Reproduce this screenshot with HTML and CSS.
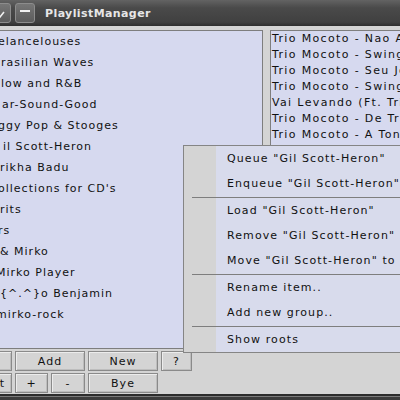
FILE: index.html
```html
<!DOCTYPE html>
<html>
<head>
  <title>PlaylistManager</title>
  <link rel="stylesheet" href="styles.css">
</head>
<body>
  <div class="window">
    <div class="titlebar">
      <span class="tb-btn tb-shade">
        <svg width="21" height="20" viewBox="0 0 21 20"><polyline points="8,11 10,14 14,9" fill="none" stroke="#f0f0f0" stroke-width="1.6"/></svg>
      </span>
      <span class="tb-btn"><span class="tb-minus"></span></span>
      <span class="tb-title">PlaylistManager</span>
    </div>

    <div class="panes">
      <ul class="groups">
        <li class="cut">elancelouses</li>
        <li>rasilian Waves</li>
        <li>low and R&amp;B</li>
        <li class="shift">ar-Sound-Good</li>
        <li class="cut">ggy Pop &amp; Stooges</li>
        <li class="shift2">il Scott-Heron</li>
        <li class="near">rikha Badu</li>
        <li class="cut">ollections for CD's</li>
        <li class="near">rits</li>
        <li class="cut">rs</li>
        <li class="near">&amp; Mirko</li>
        <li class="cut2">Mirko Player</li>
        <li class="near">{^.^}o Benjamin</li>
        <li class="cut2">mirko-rock</li>
      </ul>
      <ul class="tracks">
        <li>Trio Mocoto - Nao Adianta</li>
        <li>Trio Mocoto - Swing de Rua</li>
        <li>Trio Mocoto - Seu Jorge</li>
        <li>Trio Mocoto - Swingueira</li>
        <li>Vai Levando (Ft. Trio Mocoto)</li>
        <li>Trio Mocoto - De Tripa</li>
        <li>Trio Mocoto - A Tonga da Mironga</li>
      </ul>
    </div>

    <div class="buttons">
      <button class="btn">Play</button>
      <button class="btn wide">Add</button>
      <button class="btn">New</button>
      <button class="btn">?</button>
      <button class="btn btn-cut">Edit</button>
      <button class="btn">+</button>
      <button class="btn">-</button>
      <button class="btn">Bye</button>
    </div>

    <div class="frame-bottom"></div>

    <div class="menu">
      <div class="menu-item">Queue "Gil Scott-Heron"</div>
      <div class="menu-item">Enqueue "Gil Scott-Heron"</div>
      <div class="menu-sep"></div>
      <div class="menu-item">Load "Gil Scott-Heron"</div>
      <div class="menu-item">Remove "Gil Scott-Heron"</div>
      <div class="menu-item">Move "Gil Scott-Heron" to</div>
      <div class="menu-sep"></div>
      <div class="menu-item">Rename item..</div>
      <div class="menu-item">Add new group..</div>
      <div class="menu-sep"></div>
      <div class="menu-item">Show roots</div>
    </div>
  </div>
</body>
</html>
```

FILE: styles.css
```css
body {
  width: 400px;
  height: 400px;
  margin: 0;
  overflow: hidden;
  background: #d4d4d4;
  font-family: "DejaVu Sans", sans-serif;
  font-size: 11px;
  letter-spacing: 1px;
  color: #111;
}

.window {
  position: relative;
  height: 400px;
}

/* title bar */

.titlebar {
  display: flex;
  align-items: center;
  height: 26px;
  background: linear-gradient(#636363, #4a4a4a 30%, #404040 85%, #2e2e2e);
}

.tb-btn {
  display: flex;
  justify-content: center;
  box-sizing: border-box;
  width: 20px;
  height: 20px;
  margin-right: 4px;
  border: 1px solid #8c8c8c;
  border-radius: 3px;
  background: linear-gradient(#767676, #5c5c5c);
}

.tb-shade {
  width: 21px;
  margin-left: -10px;
}

.tb-shade svg {
  margin: -1px;
}

.tb-minus {
  width: 10px;
  height: 2px;
  margin-top: 6px;
  background: #f2f2f2;
}

.tb-title {
  margin-left: 6px;
  padding-top: 1px;
  color: #e6e6e6;
  font-weight: bold;
  letter-spacing: 0.4px;
}

/* list panes */

.panes {
  display: flex;
  gap: 7px;
  height: 319px;
  margin: 4px 0 0 -10px;
}

.groups,
.tracks {
  flex: none;
  margin: 0;
  padding: 0;
  list-style: none;
  background: #d6d9ef;
  border: 1px solid #7e7e7e;
  overflow: hidden;
}

.groups {
  width: 271px;
}

.tracks {
  width: 200px;
  letter-spacing: 1.35px;
}

.groups li {
  height: 21px;
  line-height: 21px;
  padding-left: 10px;
  white-space: nowrap;
}

.groups li.near {
  padding-left: 9px;
}

.groups li.shift {
  padding-left: 11px;
}

.groups li.shift2 {
  padding-left: 12px;
}

.groups li.cut {
  padding-left: 7px;
}

.groups li.cut2 {
  padding-left: 5px;
}

.tracks li {
  height: 16px;
  line-height: 16px;
  padding-left: 1px;
  white-space: nowrap;
}

/* buttons */

.buttons {
  display: grid;
  grid-template-columns: 70px 33px 34px 70px 31px;
  grid-template-rows: 20px 20px;
  gap: 2px 3px;
  margin: 2px 0 0 -58px;
}

.btn {
  padding: 0;
  font: inherit;
  letter-spacing: inherit;
  color: #111;
  background: #d4d4d4;
  border: 1px solid #8a8a8a;
  box-shadow: inset 1px 1px 0 #ececec, inset -1px -1px 0 #bdbdbd;
}

.btn.wide {
  grid-column: span 2;
}

.btn-cut {
  text-align: right;
  padding-right: 6px;
}

.frame-bottom {
  height: 6px;
  margin-top: 1px;
  background: linear-gradient(#2c2c2c 0 2px, #7a7a7a 2px 3px, #3c3c3c 3px);
}

/* context menu */

.menu {
  position: absolute;
  left: 183px;
  top: 145px;
  width: 240px;
  border: 1px solid #858585;
  background: linear-gradient(to right, #d4d4d4 32px, #d8dbec 32px);
}

.menu-item {
  height: 25px;
  line-height: 25px;
  padding-left: 43px;
  white-space: nowrap;
  letter-spacing: 1.1px;
}

.menu-sep {
  height: 1px;
  margin: 1px 0 0 8px;
  background: #7e7e7e;
}
```
